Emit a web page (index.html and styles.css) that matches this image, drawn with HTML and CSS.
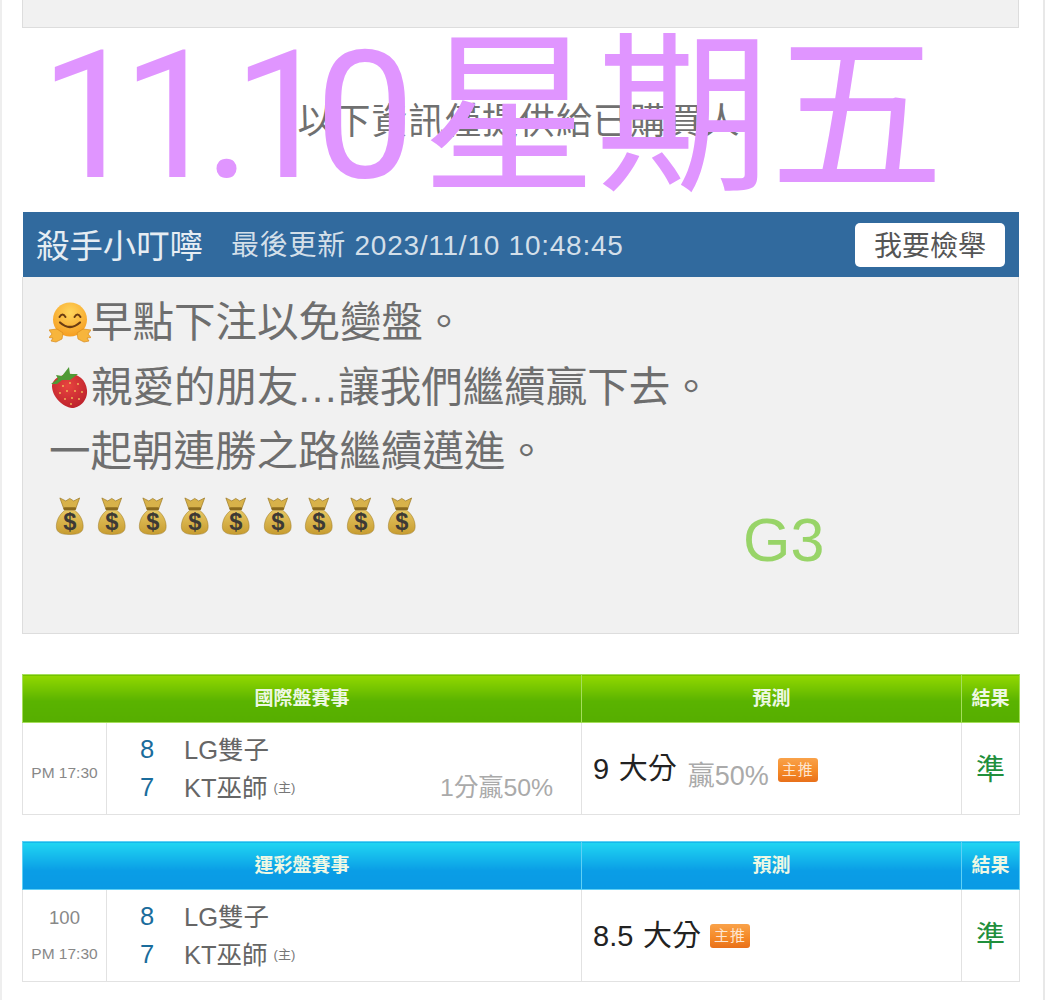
FILE: index.html
```html
<!DOCTYPE html>
<html lang="zh-Hant">
<head>
  <meta charset="UTF-8" />
  <meta name="viewport" content="width=device-width, initial-scale=1" />
  <title>殺手小叮嚀</title>
  <link rel="stylesheet" href="styles.css">
</head>
<body>

  <svg class="svg-defs" width="0" height="0" aria-hidden="true">
    <defs>
      <linearGradient id="bagFill" x1="0" y1="0" x2="0" y2="1">
        <stop offset="0" stop-color="#e6c662" />
        <stop offset="1" stop-color="#c79c30" />
      </linearGradient>
      <radialGradient id="faceFill" cx="0.5" cy="0.3" r="0.75">
        <stop offset="0" stop-color="#ffd65c" />
        <stop offset="1" stop-color="#f59a1e" />
      </radialGradient>
      <radialGradient id="berryFill" cx="0.45" cy="0.35" r="0.75">
        <stop offset="0" stop-color="#e8443f" />
        <stop offset="1" stop-color="#b81e2a" />
      </radialGradient>
      <symbol id="moneyBag" viewBox="0 0 42 42">
        <path d="M11 3 L17 6 L21 3.5 L25 6 L31 3 L27 14 L15 14 Z" fill="#d8b24a" stroke="#9a7722" stroke-width="0.7" />
        <rect x="14.5" y="12.5" width="13" height="3" rx="1.5" fill="#8a6a1e" />
        <path d="M16 15.5 C10 20 7 27 7.5 33 C8 38 12 40 21 40 C30 40 34 38 34.5 33 C35 27 32 20 26 15.5 Z" fill="url(#bagFill)" stroke="#9a7722" stroke-width="0.5" />
        <text x="21" y="35" text-anchor="middle" class="bag-sign">$</text>
      </symbol>
    </defs>
  </svg>

  <div class="page">
    <div class="prev-box"></div>

    <p class="notice">以下資訊僅提供給已購買人</p>

    <section class="panel">
      <div class="panel-head">
        <span class="seller">殺手小叮嚀</span>
        <span class="updated">最後更新 2023/11/10 10:48:45</span>
        <button class="report-btn">我要檢舉</button>
      </div>
      <div class="panel-body">
        <p class="msg-line">
          <svg class="emoji" viewBox="0 0 42 42" aria-hidden="true">
            <circle cx="21" cy="17.5" r="17" fill="url(#faceFill)" />
            <path d="M10.5 15 Q13.5 10 16.5 15 M25.5 15 Q28.5 10 31.5 15" fill="none" stroke="#6b3d12" stroke-width="2" stroke-linecap="round" />
            <path d="M11 20.5 Q21 29.5 31 20.5" fill="none" stroke="#6b3d12" stroke-width="2.2" stroke-linecap="round" />
            <path d="M0 28 L8 27 L14 31 L13 37 L7 40 L2 39 L4 36 L0 35.5 L3 32 Z" fill="#f7b53c" stroke="#d98a1c" stroke-width="0.7" />
            <path d="M42 28 L34 27 L28 31 L29 37 L35 40 L40 39 L38 36 L42 35.5 L39 32 Z" fill="#f7b53c" stroke="#d98a1c" stroke-width="0.7" />
          </svg>早點下注以免變盤。
        </p>
        <p class="msg-line">
          <svg class="emoji" viewBox="0 0 42 42" aria-hidden="true">
            <path d="M12 9 C22 3 37 9 38 23 C39 34 30 41 23 41 C14 40 3 30 3 19 C3 14 8 10 12 9 Z" fill="url(#berryFill)" />
            <path d="M2 17 L9 12 L7 8 L13 9 L20 0 L21 7 L29 7 L21 13 L13 13 L8 17 Z" fill="#4f9a35" />
            <g fill="#f2c25a">
              <circle cx="14" cy="19" r="0.9" /><circle cx="21" cy="16" r="0.9" /><circle cx="29" cy="17" r="0.9" />
              <circle cx="11" cy="26" r="0.9" /><circle cx="18" cy="24" r="0.9" /><circle cx="26" cy="24" r="0.9" />
              <circle cx="33" cy="25" r="0.9" /><circle cx="16" cy="32" r="0.9" /><circle cx="23" cy="31" r="0.9" />
              <circle cx="30" cy="32" r="0.9" /><circle cx="22" cy="37" r="0.9" />
            </g>
          </svg>親愛的朋友<span class="dots">...</span>讓我們繼續贏下去。
        </p>
        <p class="msg-line">一起朝連勝之路繼續邁進。</p>
        <p class="msg-line bags">
          <svg class="emoji"><use href="#moneyBag" /></svg><svg class="emoji"><use href="#moneyBag" /></svg><svg class="emoji"><use href="#moneyBag" /></svg><svg class="emoji"><use href="#moneyBag" /></svg><svg class="emoji"><use href="#moneyBag" /></svg><svg class="emoji"><use href="#moneyBag" /></svg><svg class="emoji"><use href="#moneyBag" /></svg><svg class="emoji"><use href="#moneyBag" /></svg><svg class="emoji"><use href="#moneyBag" /></svg>
        </p>
      </div>
    </section>

    <table class="game-table green">
      <colgroup>
        <col class="col-time" /><col class="col-teams" /><col class="col-pick" /><col class="col-result" />
      </colgroup>
      <thead>
        <tr>
          <th colspan="2">國際盤賽事</th>
          <th>預測</th>
          <th>結果</th>
        </tr>
      </thead>
      <tbody>
        <tr>
          <td class="time-cell"><span class="time single">PM 17:30</span></td>
          <td class="teams-cell">
            <div class="team-row"><span class="score">8</span><span class="team">LG雙子</span></div>
            <div class="team-row"><span class="score">7</span><span class="team">KT巫師</span><span class="home">(主)</span><span class="handicap">1分贏50%</span></div>
          </td>
          <td class="pick"><span class="pick-text">9 大分</span><span class="pick-rate">贏50%</span><span class="badge raised">主推</span></td>
          <td class="result">準</td>
        </tr>
      </tbody>
    </table>

    <table class="game-table blue">
      <colgroup>
        <col class="col-time" /><col class="col-teams" /><col class="col-pick" /><col class="col-result" />
      </colgroup>
      <thead>
        <tr>
          <th colspan="2">運彩盤賽事</th>
          <th>預測</th>
          <th>結果</th>
        </tr>
      </thead>
      <tbody>
        <tr>
          <td class="time-cell"><span class="game-no">100</span><span class="time">PM 17:30</span></td>
          <td class="teams-cell">
            <div class="team-row"><span class="score">8</span><span class="team">LG雙子</span></div>
            <div class="team-row"><span class="score">7</span><span class="team">KT巫師</span><span class="home">(主)</span></div>
          </td>
          <td class="pick"><span class="pick-text">8.5 大分</span><span class="badge">主推</span></td>
          <td class="result">準</td>
        </tr>
      </tbody>
    </table>

    <div class="date-stamp"><span class="date-num">11.10</span><span class="date-day">星期五</span></div>
    <div class="g-mark">G3</div>
  </div>

</body>
</html>
```

FILE: styles.css
```css
* {
  box-sizing: border-box;
}

body {
  background-color: white;
  font-family: 'Liberation Sans', 'Noto Sans CJK TC', sans-serif;
  margin: 0;
  padding: 0;
  color: #666;
}

p {
  margin: 0;
}

.svg-defs {
  position: absolute;
}

.page {
  position: relative;
  width: 1045px;
  height: 1000px;
  padding: 0 24px 0 20px;
  border-left: 2px solid #eee;
  border-right: 2px solid #e8e8e8;
  overflow: hidden;
}

.prev-box {
  height: 28px;
  background: #f1f1f1;
  border: 1px solid #ddd;
  border-top: none;
}

.notice {
  height: 184px;
  padding: 0 3px 5px 0;
  display: flex;
  justify-content: center;
  align-items: center;
  font-size: 36px;
  letter-spacing: 0.9px;
  color: #707070;
}

.panel-head {
  height: 65px;
  margin-left: 1px;
  background: #316a9e;
  display: flex;
  align-items: center;
  padding: 0 14px 0 13px;
}

.seller {
  font-size: 33.4px;
  margin-bottom: 3px;
  margin-right: 28px;
  color: #e6edf3;
}

.updated {
  font-size: 28px;
  letter-spacing: 0.75px;
  margin-bottom: 3px;
  color: #d3dfe9;
}

.report-btn {
  margin-left: auto;
  width: 150px;
  height: 44px;
  background: white;
  border: none;
  border-radius: 5px;
  font-family: inherit;
  font-size: 28px;
  color: #555;
  padding: 0 0 2px;
}

.panel-body {
  height: 357px;
  background: #f1f1f1;
  border: 1px solid #ddd;
  border-top: none;
  padding: 14px 0 0 26px;
}

.msg-line {
  font-size: 41.5px;
  line-height: 64.6px;
  white-space: nowrap;
  color: #6e6e6e;
}

.dots {
  letter-spacing: 1.7px;
}

.emoji {
  display: inline-block;
  width: 42px;
  height: 42px;
  vertical-align: -7px;
}

.bags .emoji {
  width: 41.5px;
  height: 41.5px;
  position: relative;
  top: -1px;
}

.bag-sign {
  font-family: 'Liberation Sans', sans-serif;
  font-size: 24px;
  font-weight: bold;
  fill: #3d3a35;
}

.game-table {
  width: 997px;
  table-layout: fixed;
  border-collapse: collapse;
  margin-top: 40px;
  background: white;
}

.game-table + .game-table {
  margin-top: 26px;
}

.col-time {
  width: 84px;
}

.col-teams {
  width: 475px;
}

.col-pick {
  width: 380px;
}

.col-result {
  width: 58px;
}

.game-table th {
  height: 48px;
  padding: 0 0 4px;
  font-size: 19px;
  font-weight: bold;
  color: #eef8e4;
  text-align: center;
}

.green th {
  background: linear-gradient(#92d800, #5ab300 55%, #56ae00);
  border: 1px solid #a5de5a;
}

.blue th {
  background: linear-gradient(#20d6f2, #0a9de6 60%, #0a9ae4);
  border: 1px solid #5fd0f5;
}

.game-table td {
  height: 92px;
  padding: 0;
  border: 1px solid #e2e2e2;
}

.time-cell {
  text-align: center;
}

.time {
  display: block;
  font-size: 15.5px;
  line-height: 36px;
  color: #888;
}

.time.single {
  margin-top: 9px;
}

.game-no {
  display: block;
  font-size: 18.5px;
  line-height: 36px;
  color: #888;
}

.game-table .teams-cell {
  padding: 0 28px 0 33px;
}

.team-row {
  display: flex;
  align-items: center;
  height: 38px;
}

.score {
  width: 44px;
  font-size: 25.5px;
  color: #1a6c9c;
}

.team {
  font-size: 25.5px;
  line-height: 30px;
  color: #666;
}

.home {
  font-size: 13px;
  line-height: 30px;
  color: #777;
  margin-left: 6px;
}

.handicap {
  margin-left: auto;
  font-size: 24.8px;
  line-height: 30px;
  color: #aaa;
}

.game-table .pick {
  padding: 0 0 5px 11px;
  white-space: nowrap;
}

.pick-text {
  font-size: 29px;
  word-spacing: 1.5px;
  color: #222;
}

.pick-rate {
  font-size: 27px;
  color: #aaa;
  margin-left: 11px;
  position: relative;
  top: 6px;
}

.badge {
  display: inline-block;
  width: 40px;
  height: 24px;
  margin-left: 9px;
  background: linear-gradient(#f9a24a, #f58a28 55%, #e8701a);
  border-radius: 3px;
  font-size: 15px;
  line-height: 24px;
  letter-spacing: 1px;
  text-align: center;
  color: #fde6d2;
  vertical-align: 5px;
}

.badge.raised {
  vertical-align: 4px;
}

.game-table .result {
  padding-bottom: 4px;
  font-size: 29px;
  color: #1f8f3c;
  text-align: center;
}

/* stickers drawn over the screenshot */
.date-stamp {
  position: absolute;
  left: 38px;
  top: 8px;
  white-space: nowrap;
  color: #e095ff;
  line-height: 216px;
  pointer-events: none;
}

.date-num {
  font-family: Roboto, sans-serif;
  font-size: 178px;
  letter-spacing: -18px;
}

.date-day {
  font-size: 174px;
  margin-left: 25px;
}

.g-mark {
  position: absolute;
  left: 741px;
  top: 505px;
  font-size: 61px;
  color: #98d468;
}
```
